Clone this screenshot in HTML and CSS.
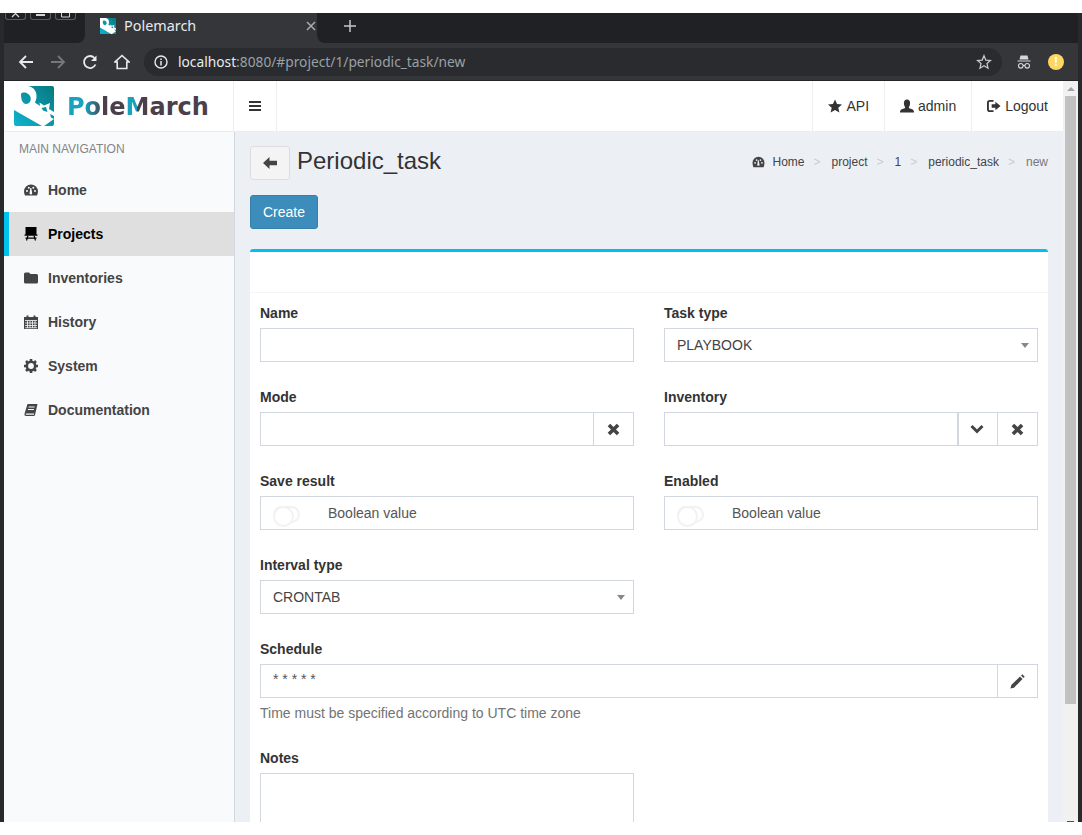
FILE: index.html
```html
<!DOCTYPE html>
<html lang="en">
<head>
  <meta charset="UTF-8">
  <meta name="viewport" content="width=device-width, initial-scale=1.0">
  <title>Polemarch</title>
  <link rel="stylesheet" href="styles.css">
</head>
<body>
  <svg class="defs" width="0" height="0">
    <defs>
      <linearGradient id="logoFill" x1="0" y1="1" x2="1" y2="0">
        <stop offset="0" stop-color="#0fb3d0"/>
        <stop offset="1" stop-color="#07797f"/>
      </linearGradient>
      <symbol id="logoMark" viewBox="0 0 40 40">
        <rect width="40" height="40" rx="2" fill="url(#logoFill)"/>
        <path fill="#fff" fill-rule="evenodd" d="M0 0 H14 C20 1 23 6 22.500 11 C22.300 13 21.800 15 20.800 16.500 L26 20 L25.500 16.500 L30 19.500 L36 17 L35 23 L40 26 V33 L30 40 H28 L0 24 Z M7 8.500 C7 6.500 10 6 12.500 7 C15.500 8.200 17.500 11 16.500 14.500 C15.500 18 12 19 9.500 17 C7.500 15 7 11.500 7 8.500 Z"/>
        <path fill="url(#logoFill)" d="M27.500 22 L32 21 L33.500 26 L29 24.500 Z M36 28 L40 30 V33 L37 31.500 Z"/>
      </symbol>
    </defs>
  </svg>

  <div class="window">
    <!-- browser tabs -->
    <div class="tabstrip">
      <div class="strip-left">
        <span class="win-btn"><svg width="9" height="7" viewBox="0 0 9 7"><path d="M1-3 L8 4 M8-3 L1 4" stroke="#d5d5d5" stroke-width="1.300"/></svg></span>
        <span class="win-btn"><svg width="9" height="7" viewBox="0 0 9 7"><path d="M0 2h9" stroke="#d5d5d5" stroke-width="2"/></svg></span>
        <span class="win-btn"><svg width="9" height="7" viewBox="0 0 9 7"><path d="M.5-2v6h8v-6" fill="none" stroke="#d5d5d5"/></svg></span>
      </div>
      <div class="tab">
        <svg class="favicon" width="16" height="16"><use href="#logoMark"/></svg>
        <span class="tab-title">Polemarch</span>
        <svg class="tab-close" width="10" height="10" viewBox="0 0 10 10"><path d="M1 1 L9 9 M9 1 L1 9" stroke="#a8acb0" stroke-width="1.500"/></svg>
      </div>
      <div class="strip-right">
        <svg width="12" height="12" viewBox="0 0 12 12"><path d="M6 0V12 M0 6H12" stroke="#c4c7ca" stroke-width="1.500"/></svg>
      </div>
    </div>

    <!-- browser toolbar -->
    <div class="toolbar">
      <svg class="tool" width="16" height="16" viewBox="0 0 16 16"><path d="M15 8H2 M8 2 L2 8 L8 14" fill="none" stroke="#e8eaed" stroke-width="1.800"/></svg>
      <svg class="tool" width="16" height="16" viewBox="0 0 16 16"><path d="M1 8H14 M8 2 L14 8 L8 14" fill="none" stroke="#75787b" stroke-width="1.800"/></svg>
      <svg class="tool" width="16" height="16" viewBox="0 0 16 16"><path d="M13.500 10.500 A6 6 0 1 1 12.500 4" fill="none" stroke="#e8eaed" stroke-width="1.800"/><path d="M14.500 1.500V7H9Z" fill="#e8eaed"/></svg>
      <svg class="tool" width="16" height="16" viewBox="0 0 16 16"><path d="M8 1.500 L15 8 H12.800 V14.500 H3.200 V8 H1 Z" fill="none" stroke="#e8eaed" stroke-width="1.600"/></svg>
      <div class="omnibox">
        <svg width="14" height="14" viewBox="0 0 14 14"><circle cx="7" cy="7" r="6" fill="none" stroke="#e8eaed" stroke-width="1.400"/><path d="M7 6V10.500 M7 3.500V5" stroke="#e8eaed" stroke-width="1.500"/></svg>
        <span class="url"><b>localhost</b>:8080/#project/1/periodic_task/new</span>
        <svg class="url-star" width="16" height="16" viewBox="0 0 16 16"><path d="M8 1.800 L9.800 6.100 L14.500 6.500 L11 9.600 L12 14.200 L8 11.800 L4 14.200 L5 9.600 L1.500 6.500 L6.200 6.100 Z" fill="none" stroke="#c4c7ca" stroke-width="1.300"/></svg>
      </div>
      <svg class="incognito" width="16" height="16" viewBox="0 0 16 16"><path d="M4.500 1.500H11.500L12.500 5.500H3.500Z M1.500 6.500H14.500V7.500H1.500Z" fill="#d5d7da"/><circle cx="4.800" cy="11.800" r="2.300" fill="none" stroke="#d5d7da" stroke-width="1.100"/><circle cx="11.200" cy="11.800" r="2.300" fill="none" stroke="#d5d7da" stroke-width="1.100"/><path d="M7 11.500H9" stroke="#d5d7da"/></svg>
      <span class="alert-dot">!</span>
    </div>

    <div class="page">
      <div class="app">
        <!-- top navbar -->
        <header class="navbar">
          <div class="brand">
            <svg width="40" height="40"><use href="#logoMark"/></svg>
            <span class="brand-name"><i class="pole">Pole</i><i class="split">M</i>arch</span>
          </div>
          <div class="burger">
            <svg width="12" height="12" viewBox="0 0 12 12"><path d="M0 2H12 M0 6H12 M0 10H12" stroke="#333" stroke-width="2"/></svg>
          </div>
          <nav class="top-links">
            <a class="top-link">
              <svg width="14" height="14" viewBox="0 0 15 15"><path fill="#333" d="M7.500 .5 L9.700 5.300 L15 5.800 L11 9.300 L12.200 14.500 L7.500 11.800 L2.800 14.500 L4 9.300 L0 5.800 L5.300 5.300 Z"/></svg>
              API
            </a>
            <a class="top-link">
              <svg width="14" height="14" viewBox="0 0 15 15"><path fill="#333" d="M7.500 .5 C10 .5 11 2.500 10.800 4.800 C10.700 6.500 10 8 9.500 8.800 C9.500 10 11 10.300 13 11 C14.500 11.600 15 12.500 15 14.500 H0 C0 12.500 .5 11.600 2 11 C4 10.300 5.500 10 5.500 8.800 C5 8 4.300 6.500 4.200 4.800 C4 2.500 5 .5 7.500 .5 Z"/></svg>
              admin
            </a>
            <a class="top-link">
              <svg width="14" height="14" viewBox="0 0 15 15"><path fill="none" stroke="#333" stroke-width="2" d="M7 2H3 Q1 2 1 4V11 Q1 13 3 13H7"/><path fill="#333" d="M5 5.700H9V3L14.500 7.500L9 12V9.300H5Z"/></svg>
              Logout
            </a>
          </nav>
        </header>

        <div class="layout">
          <aside class="sidebar">
            <div class="nav-header">MAIN NAVIGATION</div>
            <a class="nav-item">
              <svg width="14" height="14" viewBox="0 0 14 14"><path fill="currentColor" fill-rule="evenodd" d="M0 8.500 A7 7 0 0 1 14 8.500 C14 10 13.600 11.300 13 12.500 H1 C.4 11.300 0 10 0 8.500 Z M2 8 a1 1 0 1 0 2 0 a1 1 0 1 0 -2 0 Z M3.800 4.800 a1 1 0 1 0 2 0 a1 1 0 1 0 -2 0 Z M10 8 a1 1 0 1 0 2 0 a1 1 0 1 0 -2 0 Z M8.300 4.800 a1 1 0 1 0 2 0 a1 1 0 1 0 -2 0 Z M6.300 5 L5.700 9.500 a1.300 1.300 0 1 0 2.400 .3 L7.300 5 Z"/></svg>
              Home
            </a>
            <a class="nav-item active">
              <svg width="14" height="14" viewBox="0 0 14 14"><path fill="currentColor" d="M1.500 0H12.500V7.500H13.500V8.800H.5V7.500H1.500Z M1.500 10.600H12.500V11.700H1.500Z"/><path stroke="currentColor" stroke-width="1.200" d="M4 8.500 L2.500 13.500 M10 8.500 L11.500 13.500"/></svg>
              Projects
            </a>
            <a class="nav-item">
              <svg width="14" height="14" viewBox="0 0 14 14"><path fill="currentColor" d="M0 3 Q0 1.500 1.500 1.500 H5 L6.500 3 H12.500 Q14 3 14 4.500 V11 Q14 12.500 12.500 12.500 H1.500 Q0 12.500 0 11 Z"/></svg>
              Inventories
            </a>
            <a class="nav-item">
              <svg width="14" height="14" viewBox="0 0 14 14"><path fill="currentColor" d="M0 2H2.500V.5H4.500V2H9.500V.5H11.500V2H14V14H0Z"/><path stroke="#f9fafc" stroke-width=".8" d="M1 5.500H13 M1 8H13 M1 10.500H13 M1 12.800H13 M3.500 5.500V13 M6 5.500V13 M8.500 5.500V13 M11 5.500V13"/></svg>
              History
            </a>
            <a class="nav-item">
              <svg width="14" height="14" viewBox="0 0 14 14"><circle cx="7" cy="7" r="4.200" fill="none" stroke="currentColor" stroke-width="2.600"/><path stroke="currentColor" stroke-width="2.600" d="M7 0V2.500 M7 11.500V14 M0 7H2.500 M11.500 7H14 M2 2L3.800 3.800 M10.200 10.200L12 12 M12 2L10.200 3.800 M3.800 10.200L2 12"/></svg>
              System
            </a>
            <a class="nav-item">
              <svg width="14" height="14" viewBox="0 0 14 14"><path fill="currentColor" fill-rule="evenodd" d="M3.500 1 H13.500 L11 12 Q10.800 13 9.500 13 H2 Q0 13 .5 10.800 Z M4.800 3.500 L4.500 4.500 H10.500 L10.800 3.500 Z M4 6 L3.800 7 H9.800 L10 6 Z M1.800 10.500 Q1.500 11.800 2.500 11.800 H9.800 L10.200 10.500 Z"/></svg>
              Documentation
            </a>
          </aside>

          <main class="content">
            <div class="title-row">
              <button class="back-btn">
                <svg width="14" height="12" viewBox="0 0 14 12"><path fill="#444" d="M0 6 L6.500 0 V3.700 H14 V8.300 H6.500 V12 Z"/></svg>
              </button>
              <h1 class="page-title">Periodic_task</h1>
              <ol class="crumbs">
                <li>
                  <svg class="crumb-icon" width="13" height="12" viewBox="0 0 14 14"><path fill="#444" fill-rule="evenodd" d="M0 8 A7 7 0 0 1 14 8 C14 10 13.600 11.500 13 13 H1 C.4 11.500 0 10 0 8 Z M2 8 a1 1 0 1 0 2 0 a1 1 0 1 0 -2 0 Z M3.800 4.800 a1 1 0 1 0 2 0 a1 1 0 1 0 -2 0 Z M10 8 a1 1 0 1 0 2 0 a1 1 0 1 0 -2 0 Z M8.300 4.800 a1 1 0 1 0 2 0 a1 1 0 1 0 -2 0 Z M6.300 5 L5.700 9.500 a1.300 1.300 0 1 0 2.400 .3 L7.300 5 Z"/></svg>
                  Home
                </li>
                <li>project</li>
                <li>1</li>
                <li>periodic_task</li>
                <li class="current">new</li>
              </ol>
            </div>

            <button class="create-btn">Create</button>

            <section class="card">
              <div class="card-head"></div>
              <form class="card-body">
                <div class="field">
                  <label>Name</label>
                  <input class="control" type="text">
                </div>
                <div class="field">
                  <label>Task type</label>
                  <div class="control select">PLAYBOOK</div>
                </div>
                <div class="field">
                  <label>Mode</label>
                  <div class="group">
                    <input class="control" type="text">
                    <span class="addon">
                      <svg width="13" height="13" viewBox="0 0 12 12"><path d="M1.800 1.800L10.200 10.200 M10.200 1.800L1.800 10.200" stroke="#444" stroke-width="3.300"/></svg>
                    </span>
                  </div>
                </div>
                <div class="field">
                  <label>Inventory</label>
                  <div class="group">
                    <input class="control" type="text">
                    <span class="addon addon-thick">
                      <svg width="14" height="10" viewBox="0 0 14 10"><path d="M1.500 2 L7 7.500 L12.500 2" fill="none" stroke="#444" stroke-width="3"/></svg>
                    </span>
                    <span class="addon">
                      <svg width="13" height="13" viewBox="0 0 12 12"><path d="M1.800 1.800L10.200 10.200 M10.200 1.800L1.800 10.200" stroke="#444" stroke-width="3.300"/></svg>
                    </span>
                  </div>
                </div>
                <div class="field">
                  <label>Save result</label>
                  <div class="control switch-box"><span class="switch"></span>Boolean value</div>
                </div>
                <div class="field">
                  <label>Enabled</label>
                  <div class="control switch-box"><span class="switch"></span>Boolean value</div>
                </div>
                <div class="field">
                  <label>Interval type</label>
                  <div class="control select">CRONTAB</div>
                </div>
                <div class="field"></div>
                <div class="field field-wide">
                  <label>Schedule</label>
                  <div class="group">
                    <input class="control schedule" type="text" value="* * * * *">
                    <span class="addon">
                      <svg width="15" height="15" viewBox="0 0 15 15"><path fill="#444" d="M.5 14.500 L1.300 11 L10 2.500 L12.500 5 L4 13.700 Z M11 1.500 L12.300 .3 L14.700 2.700 L13.500 4 Z"/></svg>
                    </span>
                  </div>
                  <p class="help">Time must be specified according to UTC time zone</p>
                </div>
                <div class="field">
                  <label>Notes</label>
                  <textarea class="control notes"></textarea>
                </div>
              </form>
            </section>
          </main>
        </div>
      </div>

      <div class="scrollbar">
        <span class="scroll-up"></span>
        <span class="scroll-thumb"></span>
        <span class="scroll-down"></span>
      </div>
    </div>
  </div>
</body>
</html>
```

FILE: styles.css
```css
* {
  box-sizing: border-box;
}
html, body {
  height: 100%;
}
body {
  margin: 0;
  padding-top: 13px;
  background-color: #ffffff;
  font-family: "Liberation Sans", Arial, sans-serif;
  font-size: 14px;
  color: #333333;
  overflow: hidden;
}
.defs {
  position: absolute;
}

/* browser frame */
.window {
  height: 809px;
  display: flex;
  flex-direction: column;
  border-left: 4px solid #28292b;
  border-right: 4px solid #28292b;
  overflow: hidden;
}
.tabstrip {
  height: 30px;
  flex: none;
  display: flex;
  background-color: #35363a;
}
.strip-left {
  width: 81px;
  padding-left: 1px;
  display: flex;
  align-items: flex-start;
  gap: 4px;
  background-color: #202124;
  border-bottom-right-radius: 8px;
}
.win-btn {
  width: 21px;
  height: 7px;
  display: flex;
  justify-content: center;
  border: 1px solid #5c5d5f;
  border-top: none;
  border-radius: 0 0 3px 3px;
}
.win-btn svg {
  display: block;
}
.tab {
  width: 232px;
  padding: 0 0 4px 15px;
  display: flex;
  align-items: center;
}
.favicon {
  flex: none;
}
.tab-title {
  margin: 0 0 2px 8px;
  font-family: "Noto Sans", sans-serif;
  font-size: 14.4px;
  color: #e8eaed;
}
.tab-close {
  margin-left: auto;
  transform: translateX(-1px);
}
.strip-right {
  flex: 1;
  padding: 0 0 4px 27px;
  display: flex;
  align-items: center;
  background-color: #202124;
  border-bottom-left-radius: 8px;
}
.toolbar {
  height: 38px;
  flex: none;
  padding-left: 14px;
  display: flex;
  align-items: center;
  background-color: #35363a;
  border-bottom: 1px solid #232427;
}
.tool {
  margin-right: 16px;
  flex: none;
}
.omnibox {
  width: 858px;
  height: 28px;
  margin-left: -2px;
  padding: 0 10px;
  display: flex;
  align-items: center;
  flex: none;
  background-color: #292b2e;
  border-radius: 14px;
}
.url {
  margin-left: 10px;
  font-family: "Noto Sans", sans-serif;
  font-size: 13.75px;
  color: #9aa0a6;
}
.url b {
  font-weight: 400;
  color: #e8eaed;
}
.url-star {
  margin-left: auto;
}
.incognito {
  margin-left: 14px;
  flex: none;
}
.alert-dot {
  width: 16px;
  height: 16px;
  margin-left: 16px;
  flex: none;
  border-radius: 50%;
  background-color: #fdd663;
  color: #ffffff;
  font-size: 12px;
  font-weight: bold;
  line-height: 16px;
  text-align: center;
}

/* page */
.page {
  flex: 1;
  min-height: 0;
  display: flex;
}
.app {
  flex: 1;
  min-width: 0;
  display: flex;
  flex-direction: column;
  background-color: #ecf0f5;
}
.navbar {
  height: 51px;
  flex: none;
  display: flex;
  background-color: #ffffff;
  border-bottom: 1px solid #e9ecf0;
}
.brand {
  width: 230px;
  padding: 5px 0 0 10px;
  display: flex;
  gap: 13px;
  border-right: 1px solid #eeeeee;
}
.brand svg {
  flex: none;
}
.brand-name {
  margin-top: 5px;
  font-family: "DejaVu Sans", sans-serif;
  font-size: 24px;
  font-weight: 700;
  line-height: 32px;
  color: #4b3f4b;
}
.brand-name i {
  font-style: normal;
}
.brand-name .pole {
  background: linear-gradient(90deg, #17a3bd 30%, #4b3f4b 62%);
  -webkit-background-clip: text;
  background-clip: text;
  color: transparent;
}
.brand-name .split {
  background: linear-gradient(90deg, #17a3bd 50%, #4b3f4b 50%);
  -webkit-background-clip: text;
  background-clip: text;
  color: transparent;
}
.burger {
  width: 43px;
  display: flex;
  align-items: center;
  justify-content: center;
  border-right: 1px solid #eeeeee;
}
.top-links {
  margin-left: auto;
  display: flex;
}
.top-link {
  padding: 0 15px;
  display: flex;
  align-items: center;
  gap: 4px;
  border-left: 1px solid #eeeeee;
  color: #333333;
}
.layout {
  flex: 1;
  min-height: 0;
  display: flex;
}

/* sidebar */
.sidebar {
  width: 231px;
  flex: none;
  background-color: #f9fafc;
  border-right: 1px solid #d2d6de;
}
.nav-header {
  height: 36px;
  padding: 9px 15px 0;
  font-size: 12px;
  line-height: 16px;
  color: #848484;
}
.nav-item {
  height: 44px;
  padding-left: 15px;
  display: flex;
  align-items: center;
  gap: 10px;
  border-left: 5px solid transparent;
  font-weight: bold;
  color: #444444;
}
.nav-item svg {
  flex: none;
}
.nav-item.active {
  background-color: #dfdfdf;
  border-left-color: #00c0ef;
  color: #000000;
}

/* content */
.content {
  flex: 1;
  min-width: 0;
  padding: 14px 15px 0;
}
.title-row {
  height: 34px;
  display: flex;
  align-items: center;
}
.back-btn {
  width: 40px;
  height: 34px;
  padding: 0;
  display: flex;
  align-items: center;
  justify-content: center;
  background-color: #f4f4f4;
  border: 1px solid #dddddd;
  border-radius: 3px;
}
.page-title {
  margin: 0 0 4px 7px;
  font-size: 24px;
  font-weight: 400;
  color: #333333;
}
.crumbs {
  margin: 0 0 3px auto;
  padding: 0;
  display: flex;
  list-style: none;
  font-size: 12px;
  color: #444444;
}
.crumbs li + li::before {
  content: ">";
  margin: 0 11px 0 9px;
  color: #cccccc;
}
.crumbs .current {
  color: #777777;
}
.crumb-icon {
  margin-right: 4px;
  vertical-align: -2px;
}
.create-btn {
  width: 68px;
  height: 34px;
  margin-top: 15px;
  padding: 0;
  display: block;
  background-color: #3c8dbc;
  border: 1px solid #367fa9;
  border-radius: 3px;
  font: inherit;
  color: #ffffff;
}

/* form card */
.card {
  margin-top: 20px;
  background-color: #ffffff;
  border-top: 3px solid #00c0ef;
  border-radius: 3px;
}
.card-head {
  height: 41px;
  border-bottom: 1px solid #f4f4f4;
}
.card-body {
  padding: 10px;
  display: grid;
  grid-template-columns: 1fr 1fr;
  column-gap: 30px;
}
.field {
  margin-bottom: 25px;
  min-width: 0;
}
.field-wide {
  grid-column: 1 / -1;
}
.field label {
  display: block;
  margin-bottom: 5px;
  font-weight: bold;
  line-height: 20px;
}
.control {
  width: 100%;
  height: 34px;
  padding: 0 12px;
  display: flex;
  align-items: center;
  background-color: #ffffff;
  border: 1px solid #d2d6de;
  font: inherit;
  color: #444444;
  outline: none;
}
.select {
  position: relative;
}
.select::after {
  content: "";
  position: absolute;
  top: 14px;
  right: 8px;
  border-top: 5px solid #888888;
  border-left: 4px solid transparent;
  border-right: 4px solid transparent;
}
.group {
  display: flex;
}
.group .control {
  flex: 1;
  min-width: 0;
  width: auto;
  color: #555555;
}
.group .schedule {
  padding-bottom: 4px;
}
.addon {
  width: 40px;
  height: 34px;
  flex: none;
  display: flex;
  align-items: center;
  justify-content: center;
  border: 1px solid #d2d6de;
  border-left: none;
}
.addon-thick {
  padding-right: 2px;
  border-left: 1px solid #d2d6de;
}
.switch-box {
  color: #555555;
}
.switch {
  width: 27px;
  height: 17px;
  margin-right: 28px;
  flex: none;
  position: relative;
  top: 1px;
  border: 2px solid #f2f2f2;
  border-radius: 9px;
}
.switch::before {
  content: "";
  position: absolute;
  top: -2px;
  left: -2px;
  width: 17px;
  height: 17px;
  border: 2px solid #f2f2f2;
  border-radius: 50%;
  background-color: #ffffff;
}
.help {
  margin: 5px 0 0;
  line-height: 20px;
  color: #737373;
}
.notes {
  height: 120px;
  display: block;
  resize: none;
}

/* scrollbar */
.scrollbar {
  width: 15px;
  flex: none;
  position: relative;
  background-color: #f1f1f1;
}
.scroll-up {
  position: absolute;
  top: 6px;
  left: 4px;
  border-bottom: 4px solid #a3a3a3;
  border-left: 4px solid transparent;
  border-right: 4px solid transparent;
}
.scroll-thumb {
  position: absolute;
  top: 15px;
  left: 2px;
  width: 11px;
  height: 608px;
  background-color: #c1c1c1;
}
.scroll-down {
  position: absolute;
  bottom: 0;
  left: 4px;
  width: 7px;
  height: 1px;
  background-color: #505050;
}
```
